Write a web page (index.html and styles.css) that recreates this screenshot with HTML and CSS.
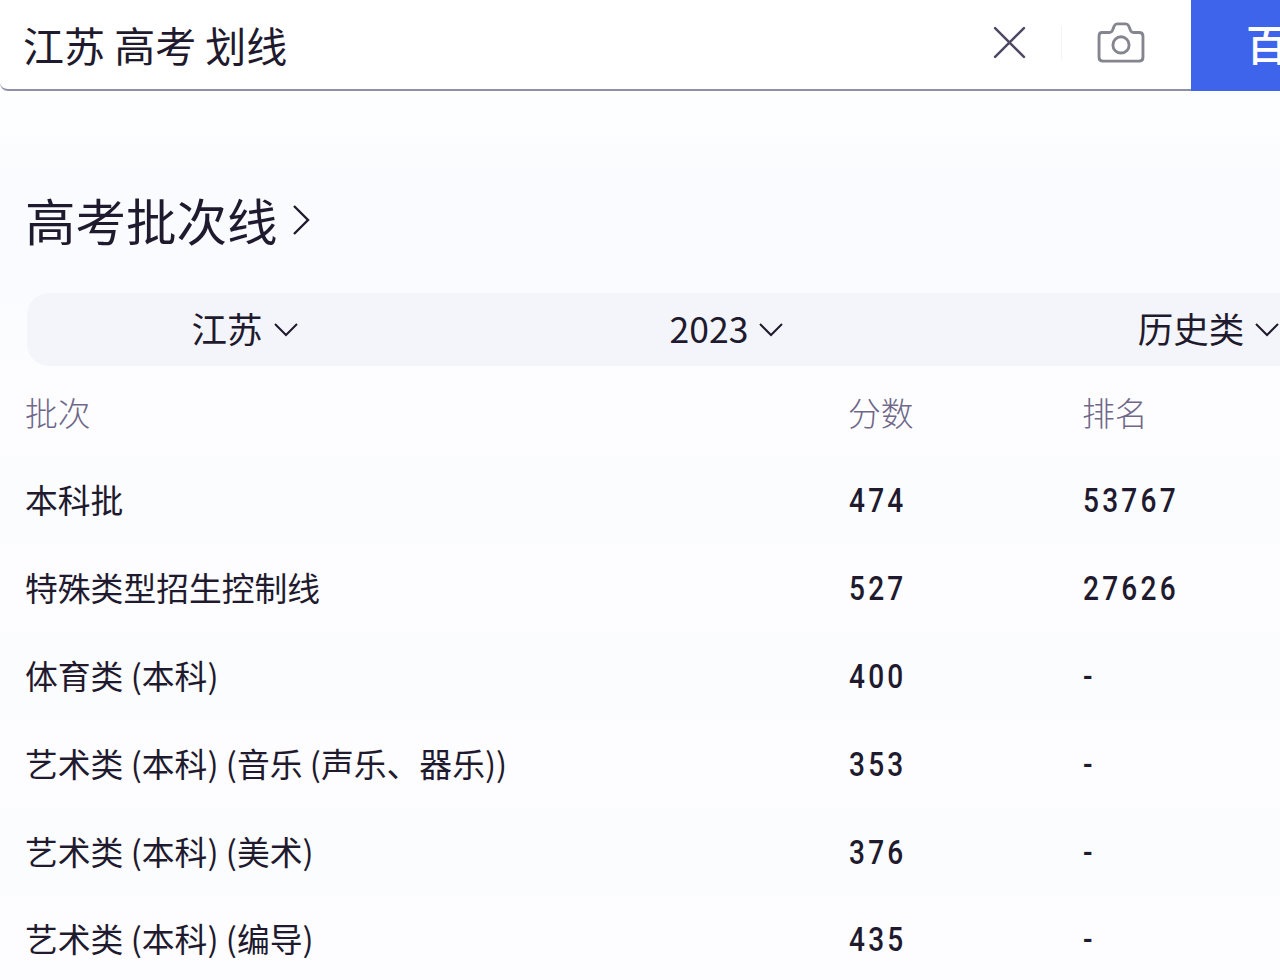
FILE: index.html
```html
<!DOCTYPE html>
<html lang="zh-CN">
<head>
  <meta charset="UTF-8" />
  <title>江苏 高考 划线</title>
  <link rel="stylesheet" href="styles.css">
</head>
<body>

  <!-- search bar -->
  <div class="search-bar">
    <div class="search-box">
      <span class="search-text">江苏 高考 划线</span>
      <svg class="icon-close" viewBox="0 0 32 32" width="33" height="33">
        <path d="M2 2 L30 30 M30 2 L2 30" fill="none" stroke="#4f4865" stroke-width="2.4" stroke-linecap="round"/>
      </svg>
      <span class="search-divider"></span>
      <svg class="icon-camera" viewBox="0 0 50 44" width="48" height="42">
        <path d="M5 11 H13 Q15 11 16 9 L18 4 Q19 2 21 2 H30 Q32 2 33 4 L35 9 Q36 11 38 11 H44 Q48 11 48 15 V37 Q48 41 44 41 H6 Q2 41 2 37 V15 Q2 11 5 11 Z" fill="none" stroke="#85858f" stroke-width="3" stroke-linejoin="round"/>
        <circle cx="25" cy="24" r="8.5" fill="none" stroke="#85858f" stroke-width="3"/>
      </svg>
    </div>
    <button class="search-btn">百度一下</button>
  </div>

  <div class="content">
    <div class="card-title">
      <span>高考批次线</span>
      <svg class="icon-arrow" viewBox="0 0 18 32" width="18" height="32">
        <path d="M2 2 L16 16 L2 30" fill="none" stroke="#1f1a2e" stroke-width="2.4"/>
      </svg>
    </div>

    <div class="filter-bar">
      <div class="filter">江苏 <svg class="icon-down" viewBox="0 0 26 15" width="26" height="15"><path d="M2 2 L13 13 L24 2" fill="none" stroke="#1f1a2e" stroke-width="2"/></svg></div>
      <div class="filter">2023 <svg class="icon-down" viewBox="0 0 26 15" width="26" height="15"><path d="M2 2 L13 13 L24 2" fill="none" stroke="#1f1a2e" stroke-width="2"/></svg></div>
      <div class="filter">历史类 <svg class="icon-down" viewBox="0 0 26 15" width="26" height="15"><path d="M2 2 L13 13 L24 2" fill="none" stroke="#1f1a2e" stroke-width="2"/></svg></div>
    </div>

    <div class="row row-head">
      <div>批次</div>
      <div>分数</div>
      <div>排名</div>
    </div>
    <div class="row alt">
      <div class="name">本科批</div>
      <div class="num">474</div>
      <div class="num">53767</div>
    </div>
    <div class="row">
      <div class="name">特殊类型招生控制线</div>
      <div class="num">527</div>
      <div class="num">27626</div>
    </div>
    <div class="row alt">
      <div class="name">体育类 (本科)</div>
      <div class="num">400</div>
      <div class="num">-</div>
    </div>
    <div class="row">
      <div class="name">艺术类 (本科) (音乐 (声乐、器乐))</div>
      <div class="num">353</div>
      <div class="num">-</div>
    </div>
    <div class="row alt">
      <div class="name">艺术类 (本科) (美术)</div>
      <div class="num">376</div>
      <div class="num">-</div>
    </div>
    <div class="row">
      <div class="name">艺术类 (本科) (编导)</div>
      <div class="num">435</div>
      <div class="num">-</div>
    </div>
  </div>

</body>
</html>
```

FILE: styles.css
```css
html, body {
  margin: 0;
  padding: 0;
  height: 100%;
  overflow: hidden;
  background: #fff;
  color: #1f1a2e;
  font-family: "Noto Sans CJK SC", "Noto Sans", sans-serif;
}

.search-bar {
  display: flex;
  height: 91px;
  width: 1380px;
}

.search-box {
  flex: none;
  width: 1191px;
  box-sizing: border-box;
  height: 91px;
  display: flex;
  align-items: center;
  padding: 0 46px 4px 23px;
  background: #fff;
  border-bottom: 2px solid #8f90a6;
  border-radius: 0 0 0 8px;
}

.search-text {
  flex: 1;
  padding-top: 3px;
  font-size: 41px;
  font-weight: 400;
  white-space: nowrap;
}

.icon-close {
  display: block;
}

.search-divider {
  width: 1px;
  height: 34px;
  margin: 0 35px 0 35px;
  background: #f3f4f8;
}

.search-btn {
  flex: none;
  width: 189px;
  height: 91px;
  border: 0;
  padding: 0 0 6px 55px;
  text-align: left;
  background: #3f64ec;
  color: #fff;
  font-family: inherit;
  font-size: 42px;
  font-weight: 500;
  white-space: nowrap;
}

.content {
  background: linear-gradient(#fdfeff 0, #fdfeff 30px, #f9fbfe 85px, #f9fbfe 190px, #fdfdff 285px);
  height: 889px;
  padding-left: 25px;
  width: 1400px;
}

.card-title {
  display: flex;
  align-items: center;
  gap: 14px;
  height: 202px;
  padding-top: 55px;
  font-size: 50.5px;
  font-weight: 400;
  line-height: 1;
  box-sizing: border-box;
}

.icon-arrow {
  display: block;
}

.filter-bar {
  display: grid;
  grid-template-columns: repeat(3, 436px);
  gap: 46px;
  width: 1400px;
  height: 73px;
  margin-left: 2px;
  background: #f4f5fa;
  border-radius: 22px;
}

.filter {
  display: flex;
  align-items: center;
  justify-content: center;
  gap: 10px;
  padding-bottom: 5px;
  font-size: 35.5px;
  white-space: nowrap;
}

.icon-down {
  display: block;
  margin-top: 5px;
}

.row {
  display: grid;
  grid-template-columns: 823px 234px 1fr;
  align-items: center;
  height: 87.8px;
  margin-left: -25px;
  padding-left: 25px;
  font-size: 32.8px;
  font-weight: 400;
  white-space: nowrap;
}

.row.alt {
  background: #fbfcfe;
}

.row-head {
  height: 91px;
  color: #6f6788;
  font-weight: 300;
}

.name {
  margin-bottom: 4px;
}

/* no DIN-style font here, so squeeze Roboto */
.num {
  margin-left: 1px;
  font-family: Roboto, sans-serif;
  font-weight: 500;
  font-size: 33px;
  letter-spacing: 3.8px;
  transform: scaleX(0.85);
  transform-origin: left center;
}
```
